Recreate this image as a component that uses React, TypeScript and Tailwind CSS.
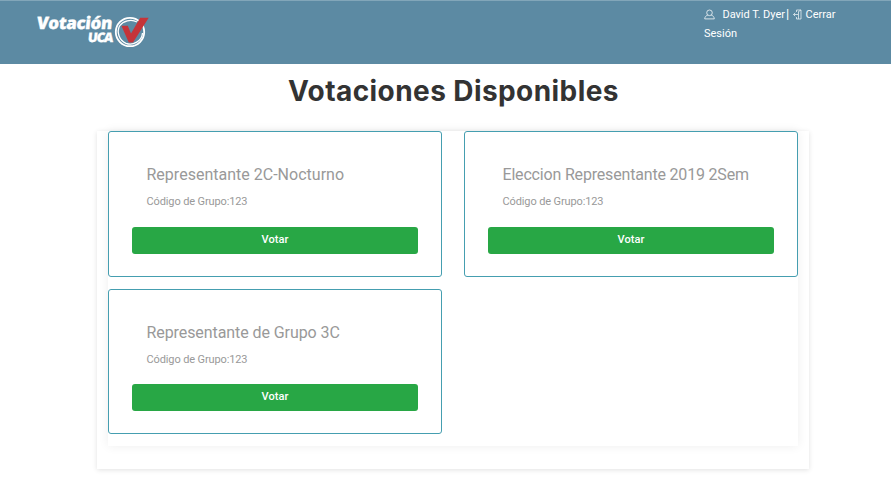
function Logo() {
  return (
    <div className="flex h-[36px] w-[114px] text-white" style={{ fontFamily: '"Open Sans", sans-serif' }}>
      <div className="flex w-[76px] flex-col pt-[1px]">
        <span className="h-[16px] whitespace-nowrap text-[17px] font-extrabold leading-[16px] tracking-[-0.35px] [-webkit-text-stroke:0.3px_white]">
          <span className="inline-block -skew-x-6">Votación</span>
        </span>
        <span className="mr-[1px] h-[13px] self-end whitespace-nowrap text-[13px] font-extrabold leading-[13px] tracking-[-1.2px] [-webkit-text-stroke:0.3px_white]">
          <span className="inline-block -skew-x-6">UCA</span>
        </span>
      </div>
      <svg className="h-[36px] w-[38px] shrink-0" viewBox="0 0 38 36" fill="none">
        <circle cx="17" cy="18" r="14.2" stroke="white" strokeWidth="1.8" />
        <path d="M24 8C18 4.5 10 7 6.5 12C3.5 18 6 26 13 29.3C20 32 29 27 29.5 19" stroke="white" strokeWidth="1.3" />
        <path d="M8.4 11.8H14.8L18 19.5L27.2 3.8H35.7L20 28.4H15.8Z" fill="#c53439" />
      </svg>
    </div>
  );
}

function UserIcon() {
  return (
    <svg className="mr-[7.5px] inline-block h-[11px] w-[11px] align-[-1.5px]" viewBox="0 0 11 11" fill="none" stroke="#e5edf1" strokeWidth="0.9">
      <circle cx="5.5" cy="3.8" r="2.8" />
      <path d="M3.8 6.1C2 6.6 .8 7.9.7 9.9H10.3C10.2 7.9 9 6.6 7.2 6.1" />
    </svg>
  );
}

function ExitIcon() {
  return (
    <svg className="ml-[4px] mr-[3.5px] inline-block h-[11px] w-[9px] align-[-1.5px]" viewBox="0 0 9 11" fill="none" stroke="#e5edf1" strokeWidth="0.8">
      <path d="M3.5 3V1H8V10H3.5V8M5.5 10V2.5L8 1M.5 5.5H5M2.2 3.8L.5 5.5L2.2 7.2" />
    </svg>
  );
}

function Card({ title, className }: { title: string; className: string }) {
  return (
    <article className="flex h-[145.5px] flex-col rounded-[3px] border border-[#459eb0] bg-white px-[23px] pt-[32px] text-[#999]">
      <h2 className={`ml-[14.5px] whitespace-nowrap text-[16px] leading-[22px] ${className}`}>{title}</h2>
      <p className="ml-[14.5px] mt-[8px] whitespace-nowrap text-[11px] leading-[16px] tracking-[-0.12px]">Código de Grupo:123</p>
      <button className="mt-[16.75px] h-[27px] w-full shrink-0 rounded-[3px] bg-[#28a745] pb-[1.25px] text-[11px] font-medium leading-[16px] tracking-[0.05px] text-white">
        Votar
      </button>
    </article>
  );
}

export default function App() {
  return (
    <div className="h-[480px] overflow-hidden bg-white" style={{ fontFamily: 'Roboto, sans-serif' }}>
      <header className="flex h-[64px] items-start justify-between border-t border-[#82a6b9] bg-[#5c8aa3] pl-[37px] pr-[37px]">
        <div className="pt-[13px]">
          <Logo />
        </div>
        <div className="w-[150px] whitespace-nowrap pt-[4px] text-[11px] leading-[19px] text-white">
          <div>
            <UserIcon />
            <span className="tracking-[-0.03px]">David T. Dyer</span>
            <span className="ml-[1px] text-[13px] leading-[12px]">|</span>
            <ExitIcon />
            <span>Cerrar</span>
          </div>
          <div>Sesión</div>
        </div>
      </header>
      <main>
        <h1 className="ml-[288px] mt-[9px] h-[36px] whitespace-nowrap text-[28px] font-bold leading-[36px] tracking-[0.42px] text-[#333]" style={{ fontFamily: 'Inter, sans-serif' }}>
          Votaciones Disponibles
        </h1>
        <section className="ml-[97px] mt-[22px] h-[338px] w-[712px] bg-white px-[11px] shadow-[0_1px_5px_rgba(0,0,0,0.12)]">
          <div className="grid h-[315px] grid-cols-2 content-start gap-x-[22px] gap-y-[12px] shadow-[0_0_10px_rgba(0,0,0,0.07)]">
            <Card title="Representante 2C-Nocturno" className="tracking-[0.01px]" />
            <Card title="Eleccion Representante 2019 2Sem" className="tracking-[-0.18px]" />
            <Card title="Representante de Grupo 3C" className="tracking-[-0.08px]" />
          </div>
        </section>
      </main>
    </div>
  );
}
